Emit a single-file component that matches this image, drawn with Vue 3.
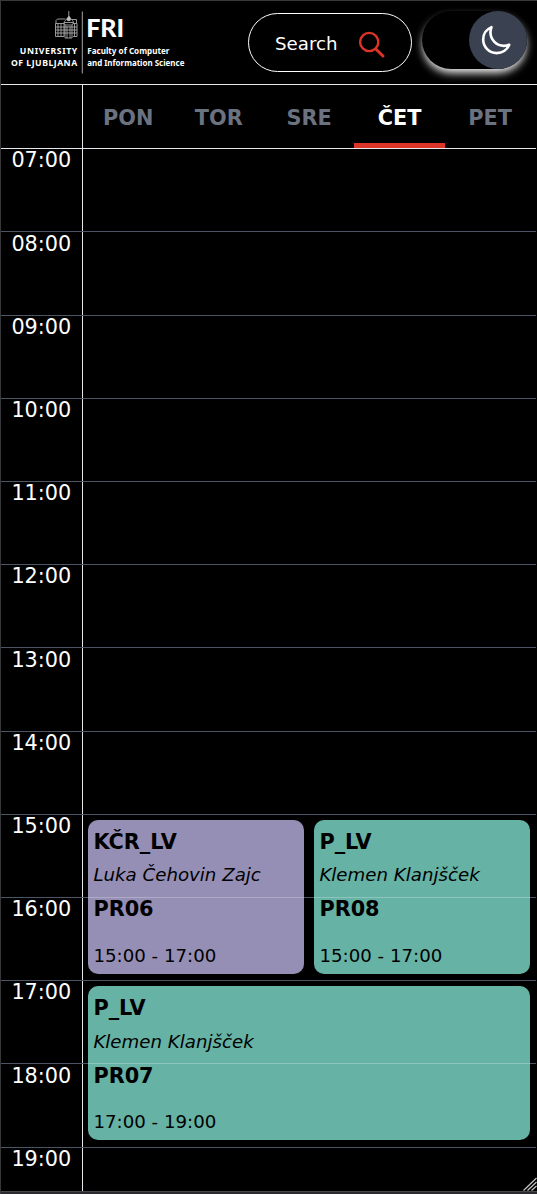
<script setup>
const days = ['PON', 'TOR', 'SRE', 'ČET', 'PET']
const activeDay = 'ČET'
const hours = Array.from({ length: 13 }, (_, i) => String(i + 7).padStart(2, '0') + ':00')
const lessons = [
  { title: 'KČR_LV', teacher: 'Luka Čehovin Zajc', room: 'PR06', time: '15:00 - 17:00', place: 'early left', tone: 'violet' },
  { title: 'P_LV', teacher: 'Klemen Klanjšček', room: 'PR08', time: '15:00 - 17:00', place: 'early right', tone: 'teal' },
  { title: 'P_LV', teacher: 'Klemen Klanjšček', room: 'PR07', time: '17:00 - 19:00', place: 'late', tone: 'teal' }
]
</script>

<template>
  <div class="frame">
    <div class="screen">
      <header class="top">
        <svg class="logo" width="178" height="66" viewBox="10 9 178 66">
          <g fill="none" stroke="#a8a8a8" stroke-width="0.9">
            <path d="M68.800 11v5M56 23.500v-3l1.500-1.500h8M72 19.500h4.500v4M55.500 23.500h8.500v13h-8.500z" />
            <path d="M58 24v12M61 24v12M55.500 27h21.500M55.500 30h21.500M55.500 33h21.500M73 36.500h4v-13h-4M74.500 23.500v13" />
            <path d="M65 38V25l-1-2c0-2 2-3 3-4l2-3 2 3c1 1 2.500 2 2.500 4l-1.500 2v13zM67 26v12M70 26v12M64 22.500h9M65 25h7" />
          </g>
          <path d="M66.500 19l2.300-3 2.300 3-1 2h-2.600z" fill="#bdbdbd" />
          <path d="M82.300 11.500v62" stroke="#a5a5a5" stroke-width="1" />
          <g fill="#fff" class="logo-text">
            <text class="brand" x="86.200" y="37" font-size="24.200" textLength="38" lengthAdjust="spacingAndGlyphs">FRI</text>
            <text x="19.800" y="54.300" font-size="8.700" textLength="57.500">UNIVERSITY</text>
            <text x="11" y="65.800" font-size="8.700" textLength="66.200">OF LJUBLJANA</text>
            <text x="87.200" y="54.300" font-size="8.800" textLength="82.200" lengthAdjust="spacingAndGlyphs">Faculty of Computer</text>
            <text x="87.200" y="65.800" font-size="8.800" textLength="97.200" lengthAdjust="spacingAndGlyphs">and Information Science</text>
          </g>
        </svg>
        <button class="search">
          <span>Search</span>
          <svg width="28" height="28" viewBox="0 0 28 28" fill="none" stroke="#dc3426" stroke-width="2.400" stroke-linecap="round">
            <circle cx="11.200" cy="11" r="9.100" />
            <path d="M17.800 18l7.200 7" stroke-width="3" />
          </svg>
        </button>
        <div class="toggle">
          <div class="knob">
            <svg width="33.300" height="33.300" viewBox="0 0 24 24" fill="none" stroke="#fff" stroke-width="1.900" stroke-linecap="round" stroke-linejoin="round">
              <path d="M21.752 15.002A9.718 9.718 0 0118 15.750c-5.385 0-9.750-4.365-9.750-9.750 0-1.330.266-2.597.748-3.752A9.753 9.753 0 003 11.250C3 16.635 7.365 21 12.750 21a9.753 9.753 0 009.002-5.998z" />
            </svg>
          </div>
        </div>
      </header>

      <nav class="days">
        <div class="corner"></div>
        <div v-for="d in days" :key="d" class="day" :class="{ active: d === activeDay }">{{ d }}</div>
      </nav>

      <main class="timetable">
        <div v-for="h in hours" :key="h" class="hour"><span class="label">{{ h }}</span></div>
        <div class="lessons">
          <article v-for="(l, i) in lessons" :key="i" class="lesson" :class="[l.place, l.tone]">
            <h2>{{ l.title }}</h2>
            <p class="teacher">{{ l.teacher }}</p>
            <h2 class="room">{{ l.room }}</h2>
            <p class="time">{{ l.time }}</p>
          </article>
        </div>
      </main>
      <svg class="grip" width="14" height="14" viewBox="0 0 14 14" stroke="#c4c4c4" stroke-width="1.200">
        <path d="M0.500 13.500L13.500 1M4.500 13.500L13.500 5M8.500 13.500L13.500 9" />
      </svg>
    </div>
  </div>
</template>

<style>
body { margin: 0; background: #000; }
</style>

<style scoped>
* { box-sizing: border-box; }
.frame {
  width: 537px;
  height: 1194px;
  overflow: hidden;
  background: #2b2a2e;
  border-left: 1px solid #38383b;
  border-top: 1px solid #38383b;
  font-family: "DejaVu Sans", sans-serif;
  font-size: 20.8px;
  line-height: 31.2px;
  color: #fff;
}
.screen {
  position: relative;
  height: 1191px;
  overflow: hidden;
  background: #000;
  border-bottom: 1px solid #48474b;
}
.top {
  height: 84px;
  display: flex;
  align-items: flex-start;
  padding: 8px 9px 0 9px;
  border-bottom: 1px solid #e5e7eb;
}
.logo { flex: none; overflow: visible; }
.logo-text { font-family: "Noto Sans", sans-serif; font-weight: 700; }
.brand { font-family: Lato, sans-serif; font-weight: 900; }
.search {
  flex: none;
  width: 164px;
  height: 59px;
  margin: 4px 0 0 60px;
  padding: 0 25px 0 26px;
  display: flex;
  align-items: center;
  justify-content: space-between;
  border: 1px solid #fff;
  border-radius: 30px;
  background: #000;
  color: #fff;
  font: 18.2px/26px "DejaVu Sans", sans-serif;
}
.search span { padding-top: 2px; }
.search svg { margin-top: 4px; }
.toggle {
  flex: none;
  width: 105.4px;
  height: 58px;
  margin: 2px 0 0 9.6px;
  display: flex;
  justify-content: flex-end;
  border-radius: 29px;
  background: #000;
  box-shadow: 0 5px 8px -1px rgba(255, 255, 255, 0.95);
}
.knob {
  width: 58px;
  height: 58px;
  display: flex;
  align-items: center;
  justify-content: center;
  padding: 2px 4px 0 0;
  border-radius: 50%;
  background: #3a4252;
}
.days {
  height: 64px;
  display: grid;
  grid-template-columns: 82px repeat(5, 1fr);
  margin-right: 1.6px;
  border-bottom: 1px solid #e5e7eb;
}
.corner { border-right: 1px solid #e5e7eb; }
.day {
  display: flex;
  align-items: center;
  justify-content: center;
  padding-top: 9px;
  border-bottom: 5px solid transparent;
  font-weight: 700;
  color: #6b7280;
}
.day.active { color: #fff; border-bottom-color: #dc3426; }
.timetable {
  position: relative;
  margin: -0.720px 1px 0 0;
}
.hour {
  height: 83.2px;
  border-top: 1px solid #4b5563;
}
.hour:first-child { border-top-color: #e5e7eb; }
.label {
  display: block;
  width: 82px;
  height: 84px;
  padding: 0.160px 10.700px 0 0;
  border-right: 1px solid #e5e7eb;
  text-align: right;
  line-height: 23.200px;
}
.lessons {
  position: absolute;
  inset: 0 1px 0 82px;
  display: grid;
  grid-template-columns: 1fr 1fr;
  grid-template-rows: repeat(13, 83.2px);
}
.lesson {
  position: relative;
  margin: 6px 5px 6.300px;
  padding: 7px 5.400px 0;
  border-radius: 10px;
  color: #000;
}
.lesson::after {
  content: "";
  position: absolute;
  left: 0;
  right: 0;
  top: 77px;
  height: 1px;
  background: rgba(255, 255, 255, 0.25);
}
.early { grid-row: 9 / span 2; }
.left { grid-column: 1; }
.right { grid-column: 2; }
.late { grid-row: 11 / span 2; grid-column: 1 / 3; }
.violet { background: #958fb5; }
.teal { background: #66b2a5; }
h2, p { margin: 0; }
h2 { font-size: 20.8px; line-height: 31.2px; font-weight: 700; }
.teacher { margin-top: 4.400px; font-size: 18.2px; line-height: 26px; font-style: italic; }
.room { margin-top: 5.820px; }
.time { margin-top: 17.600px; font-size: 18.2px; line-height: 26px; }
.grip { position: absolute; right: 0; bottom: 0; }
</style>
